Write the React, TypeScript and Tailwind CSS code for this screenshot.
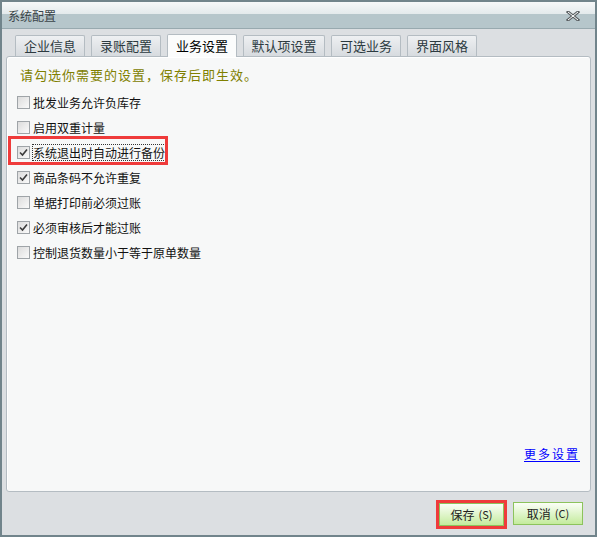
import React from "react";

const TABS = [
  { label: "企业信息", w: "w-[70px]" },
  { label: "录账配置", w: "w-[70px]" },
  { label: "业务设置", w: "w-[70px]" },
  { label: "默认项设置", w: "w-[82px]" },
  { label: "可选业务", w: "w-[70px]" },
  { label: "界面风格", w: "w-[70px]" },
];

const OPTIONS = [
  { label: "批发业务允许负库存", checked: false },
  { label: "启用双重计量", checked: false },
  { label: "系统退出时自动进行备份", checked: true, focus: true },
  { label: "商品条码不允许重复", checked: true },
  { label: "单据打印前必须过账", checked: false },
  { label: "必须审核后才能过账", checked: true },
  { label: "控制退货数量小于等于原单数量", checked: false },
];

function CheckBox({ checked }: { checked: boolean }) {
  return (
    <span className="w-[13px] h-[13px] shrink-0 border border-[#9fa4a8] bg-gradient-to-br from-[#dcdcdc] to-[#fafafa] flex items-center justify-center">
      {checked && (
        <svg width="9" height="9" viewBox="0 0 9 9">
          <path d="M1 4.5 L3.5 7 L8 1.5" fill="none" stroke="#3b3b3b" strokeWidth="1.6" />
        </svg>
      )}
    </span>
  );
}

function Button({ label, hotkey, w }: { label: string; hotkey: string; w: string }) {
  return (
    <button
      className={`${w} h-[23px] border border-[#8cc35c] bg-gradient-to-b from-[#fbfef7] to-[#c4eb9c] text-[12px] text-[#222] flex items-center justify-center gap-[4px]`}
    >
      <span>{label}</span>
      <span className="text-[11px]">({hotkey})</span>
    </button>
  );
}

export default function App() {
  return (
    <div
      className="w-[597px] h-[537px] flex flex-col border-2 border-[#71848b] bg-[#dcdfe2] text-[12px]"
      style={{ fontFamily: '"Noto Sans CJK SC", "Noto Sans", sans-serif' }}
    >
      {/* title bar */}
      <div className="h-[27px] flex items-end justify-between bg-gradient-to-b from-[#f6f8f9] via-[#e4eaec] via-45% to-[#b6c6cb] to-45% border-b border-[#98a9af]">
        <span className="pl-[6px] pb-[3px] text-[12px] text-[#3a4448]">系统配置</span>
        <svg width="14" height="10" viewBox="0 0 14 10" className="mr-[15px] mb-[7px]">
          <path d="M2 1 L12 9 M12 1 L2 9" stroke="#5a5f62" strokeWidth="3" strokeLinecap="square" />
          <path d="M2 1 L12 9 M12 1 L2 9" stroke="#ffffff" strokeWidth="1" />
        </svg>
      </div>

      <div className="flex-1 flex flex-col px-[4px] pt-[5px]">
        {/* tabs */}
        <div className="flex items-end gap-[6px] pl-[9px] h-[22px] relative z-10">
          {TABS.map((t) =>
            t.label === "业务设置" ? (
              <div
                key={t.label}
                className={`${t.w} h-[23px] flex items-center justify-center bg-[#fbfcfc] border border-b-0 border-[#b4bcc2] rounded-t-[2px] text-[13px] text-black -mb-px`}
              >
                {t.label}
              </div>
            ) : (
              <div
                key={t.label}
                className={`${t.w} h-[21px] flex items-center justify-center bg-gradient-to-b from-[#eef0f2] to-[#d7dbdf] border border-b-0 border-[#b4bcc2] rounded-t-[2px] text-[13px] text-[#2c3a40]`}
              >
                {t.label}
              </div>
            )
          )}
        </div>

        {/* settings panel */}
        <div className="h-[436px] flex flex-col border border-[#b4bcc2] rounded-[3px] bg-[#f7f8f8] shadow-[inset_1px_1px_0_#ffffff]">
          <p className="pl-[13px] pt-[8px] text-[13px] tracking-[1px] text-[#808000]">请勾选你需要的设置，保存后即生效。</p>
          <div className="flex flex-col pl-[10px] pt-[10px] gap-[9px]">
            {OPTIONS.map((o) => (
              <div key={o.label} className="h-[16px] flex items-center gap-[3px]">
                {o.focus ? (
                  <div className="relative flex items-center gap-[3px]">
                    <span className="absolute left-[-9px] top-[-9px] w-[160px] h-[29px] border-[3px] border-[#ef3b3b]" />
                    <CheckBox checked={o.checked} />
                    <span className="outline outline-1 outline-dotted outline-[#333] text-[#111] leading-[15px]">{o.label}</span>
                  </div>
                ) : (
                  <>
                    <CheckBox checked={o.checked} />
                    <span className="text-[#111]">{o.label}</span>
                  </>
                )}
              </div>
            ))}
          </div>
          <div className="flex-1" />
          <div className="flex justify-end pr-[10px] pb-[28px]">
            <a className="text-[#0000ff] underline underline-offset-2 tracking-[2px]">更多设置</a>
          </div>
        </div>

        {/* action buttons */}
        <div className="flex-1 flex items-start justify-end gap-[6px] pt-[8px] pr-[8px]">
          <div className="border-[3px] border-[#ef3b3b] flex">
            <Button label="保存" hotkey="S" w="w-[65px]" />
          </div>
          <div className="pt-[2px]">
            <Button label="取消" hotkey="C" w="w-[70px]" />
          </div>
        </div>
      </div>
    </div>
  );
}
